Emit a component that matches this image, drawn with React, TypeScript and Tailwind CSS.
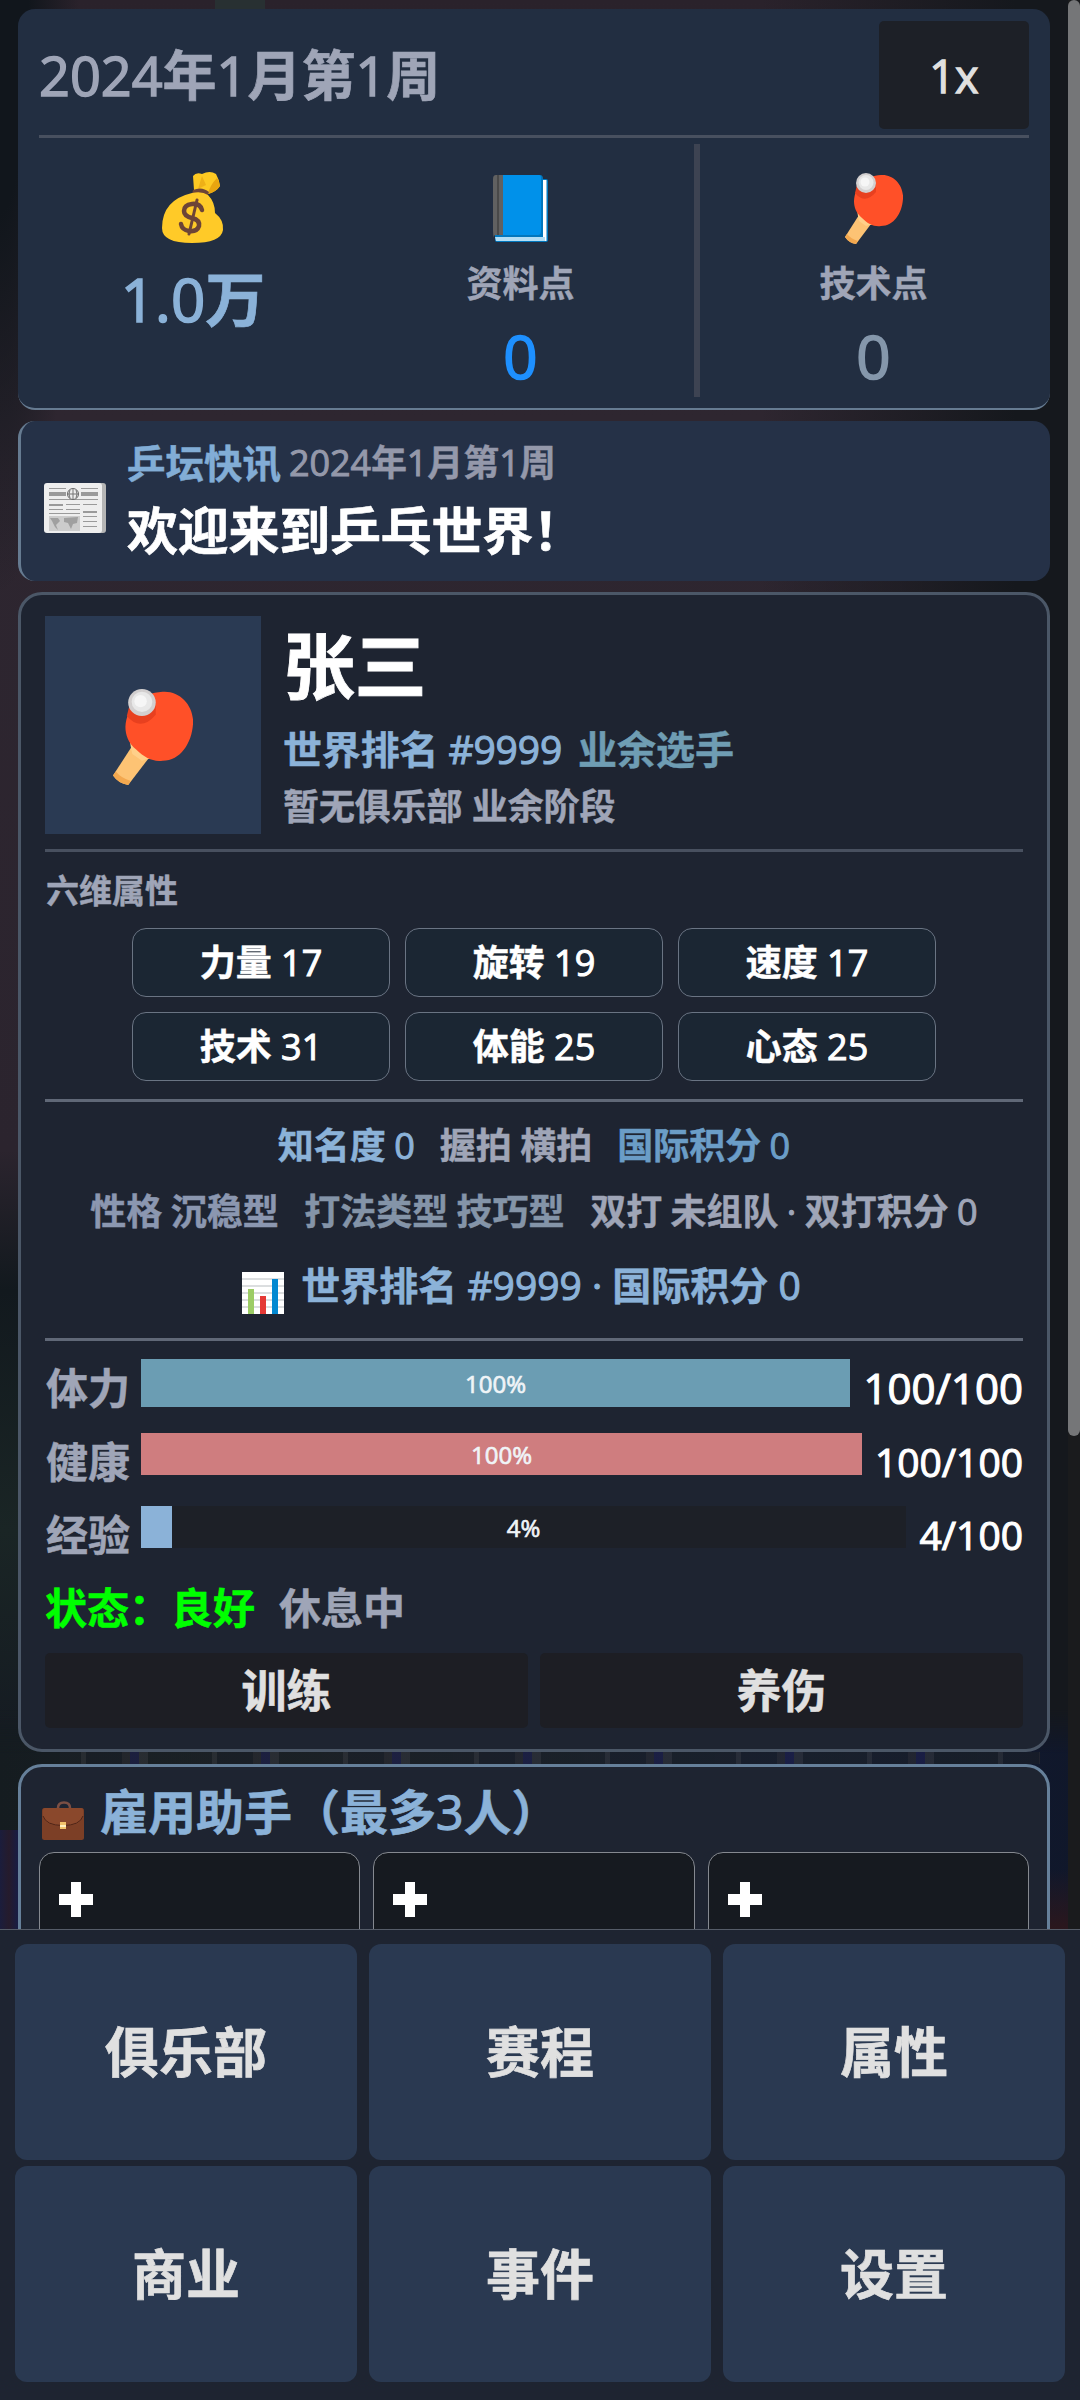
import type { ReactNode } from 'react'
import clsx from 'clsx'

const stats = [
  { label: '力量', value: 17 },
  { label: '旋转', value: 19 },
  { label: '速度', value: 17 },
  { label: '技术', value: 31 },
  { label: '体能', value: 25 },
  { label: '心态', value: 25 },
]

const navItems = ['俱乐部', '赛程', '属性', '商业', '事件', '设置']

const HAN = 'font-bold [-webkit-text-stroke:0.012em]'
const LATIN = 'font-medium [-webkit-text-stroke:0.028em]'

// Han characters are drawn bold, digits and latin one step lighter
function T({ children }: { children: string }) {
  const runs = children.match(/[\u3000-\u9fff\uff00-\uffef]+|[^\u3000-\u9fff\uff00-\uffef]+/g) ?? []
  return (
    <>
      {runs.map((run, i) => (
        <span key={i} className={/[\u3000-\uffef]/.test(run) ? HAN : LATIN}>
          {run}
        </span>
      ))}
    </>
  )
}

function Paddle({ className }: { className?: string }) {
  return (
    <svg viewBox="0 0 58 71" className={className} preserveAspectRatio="none">
      <path d="M14 42 L26 51 L11 71 Q4 70 0 64 Z" fill="#fdc374" />
      <path d="M0 64 Q4 70 11 71 L13 68 Q6 66 2 61 Z" fill="#f3a84f" />
      <path d="M12 37 Q13 44 14 48 L21 53 Q26 51 31 52 Z" fill="#ffd08a" />
      <path
        d="M36 2 C49 1 59 13 58 26 C57 40 49 53 36 53 C29 54 23 51 17 45 C11 40 9 34 9 28 C10 13 20 3 36 2 Z"
        fill="#ff5028"
      />
      <path d="M10 20 Q20 32 31 19 L31 10 L12 12 Z" fill="#e8401f" />
      <circle cx="21" cy="10" r="10" fill="#d2cfcf" />
      <circle cx="21" cy="9.500" r="7.500" fill="#e8e8e8" />
      <circle cx="20" cy="9" r="4.500" fill="#f6f6f6" />
    </svg>
  )
}

function MoneyBag() {
  return (
    <svg viewBox="0 0 62 72" className="h-[72px] w-[62px]">
      <path d="M32 18 L31 4 Q34 0 40 2 Q48 -2 54 2 Q57 7 58 14 Q54 20 46 22 Z" fill="#fdc922" />
      <path d="M46 22 Q48 13 55 6 Q57 9 58 14 Q54 20 46 22 Z" fill="#e8a510" />
      <path d="M40 4 L44 13 L36 17 Z" fill="#eeb017" />
      <path d="M31 18 Q40 14 47 20 L45 25 Q37 21 30 22 Z" fill="#6d4437" />
      <path
        d="M30 21 Q40 19 46 23 Q53 30 53 41 Q62 48 61 58 Q59 71 30 71 Q0 71 0 56 Q0 28 30 21 Z"
        fill="#ffca28"
      />
      <g fill="none" stroke="#6d4437" strokeWidth="4.500" strokeLinecap="round">
        <path d="M40 38 Q38 31 30 32 Q22 33 22 39 Q22 44 30 46 Q38 48 37 54 Q35 60 27 59 Q20 58 19 52" />
        <path d="M35 28 L27 62" strokeWidth="3" />
      </g>
    </svg>
  )
}

function Book() {
  return (
    <svg viewBox="0 0 55 67" className="h-[67px] w-[55px]">
      <rect x="2" y="4" width="53" height="63" rx="2" fill="#0277bd" />
      <path d="M50 5 H53.500 V66 H50 Z" fill="#fff" />
      <path d="M2 62 H52 V66 H3 Z" fill="#b3def5" />
      <path d="M3 0 H47 Q50 0 50 4 V58 Q49 61 46 61 H3 Z" fill="#0277bd" />
      <path d="M10 0 H46 Q48 0 48 3 V56 Q48 60 45 60 H10 Z" fill="#0091ea" />
      <path d="M3 0 H10 V60 H2 Q0 61 1 64 Q-1 60 0 4 Q0 0 3 0 Z" fill="#616161" />
      <path d="M5 0 V60" stroke="#424242" strokeWidth="1.500" />
    </svg>
  )
}

function Newspaper() {
  return (
    <svg viewBox="0 0 62 50" className="h-[50px] w-[62px]" preserveAspectRatio="none">
      <rect x="3" y="0" width="59" height="50" rx="3" fill="#b5b5b5" />
      <rect x="0" y="0" width="58" height="50" rx="3" fill="#eeeeee" />
      <g fill="#9a9a9a">
        <rect x="5" y="5" width="17" height="1" />
        <rect x="37" y="5" width="17" height="1" />
        <rect x="5" y="9" width="17" height="4" />
        <rect x="37" y="9" width="17" height="4" />
        <rect x="5" y="16" width="49" height="1" />
        <rect x="5" y="21" width="14" height="2" />
        <rect x="22" y="21" width="14" height="1" />
        <rect x="39" y="21" width="14" height="1" />
        <rect x="5" y="26" width="14" height="1" />
        <rect x="22" y="26" width="14" height="1" />
        <rect x="39" y="28" width="14" height="2" />
        <rect x="5" y="30" width="31" height="1" />
        <rect x="39" y="33" width="14" height="1" />
        <rect x="39" y="38" width="14" height="1" />
        <rect x="39" y="43" width="14" height="1" />
      </g>
      <ellipse cx="29" cy="11" rx="5.500" ry="5.500" fill="#eee" stroke="#666" />
      <path d="M24 11 H34 M29 6 V16 M26 7 Q24 11 26 15 M32 7 Q34 11 32 15" stroke="#777" fill="none" />
      <rect x="5" y="33" width="31" height="15" fill="#cccccc" />
      <path
        d="M6 35 H14 L16 38 L12 42 L14 47 L11 44 L8 38 Z M20 35 L34 34 L33 40 L29 41 L27 46 L24 40 L20 39 Z"
        fill="#a0a0a0"
      />
    </svg>
  )
}

function BarChart() {
  return (
    <svg viewBox="0 0 42 42" className="h-[42px] w-[42px]">
      <rect width="42" height="42" fill="#fff" />
      <path d="M0 7 H42 M0 14 H42 M0 21 H42 M0 28 H42 M0 35 H42" stroke="#b8bdc0" />
      <rect x="6" y="17" width="6" height="25" fill="#9ccc65" />
      <rect x="18" y="24" width="6" height="18" fill="#e53935" />
      <rect x="30" y="7" width="6" height="35" fill="#0288d1" />
    </svg>
  )
}

function Briefcase() {
  return (
    <svg viewBox="0 0 42 39" className="h-[39px] w-[42px]">
      <path d="M16 7 Q16 1.500 22 1.500 Q28 1.500 28 7" fill="none" stroke="#7b4f44" strokeWidth="2.500" />
      <rect x="0" y="7" width="42" height="32" rx="2.500" fill="#7c3f26" />
      <path d="M1 9 Q1 7 3 7 H39 Q41 7 41 9 V16 Q38 25 21 25 Q4 25 1 16 Z" fill="#8a482c" />
      <path d="M1 15 Q4 24.500 21 24.500 Q38 24.500 41 15" fill="none" stroke="#4e2417" />
      <rect x="18" y="21" width="6" height="7" fill="#f2c36b" />
      <rect x="18" y="24" width="6" height="2" fill="#fff0c0" />
    </svg>
  )
}

function Plus() {
  return (
    <svg viewBox="0 0 34 35" className="h-[35px] w-[34px]">
      <path d="M12 0 H22 V12 H34 V23 H22 V35 H12 V23 H0 V12 H12 Z" fill="#fff" />
    </svg>
  )
}

// Dimmed, out of focus spectator stands behind the panels
function Backdrop() {
  return (
    <>
      <div className="absolute inset-y-0 right-0 w-[320px] bg-[linear-gradient(90deg,transparent,#15181d_80%)]" />
      <div className="absolute top-0 left-0 h-[600px] w-[80px] bg-[radial-gradient(ellipse_at_top_left,#11161c_25%,transparent_70%)]" />
      <div className="absolute top-0 left-[215px] h-[9px] w-[50px] bg-[#283032]" />
      <div className="absolute top-[1710px] left-0 h-[219px] w-full bg-[linear-gradient(90deg,#151c20,#1b2027_30%,#141d36_75%,#10172a)] [mask-image:linear-gradient(180deg,transparent,#000_20%)]" />
      <div className="absolute top-[1752px] left-[60px] h-3 w-[980px] bg-[repeating-linear-gradient(90deg,#1c2126_0_21px,#33363b_21px_26px,#1a1f27_26px_62px,#2b2c31_62px_70px,#1e2050_70px_79px,#33363b_79px_88px,#1b2125_88px_131px)] opacity-60" />
      <div className="absolute top-[1830px] left-0 h-[99px] w-[18px] bg-[linear-gradient(90deg,#1b1d3c,#251b2c,#181d44)]" />
      <div className="absolute right-3 bottom-[471px] h-[60px] w-[20px] bg-[linear-gradient(180deg,transparent,#2b171d)]" />
    </>
  )
}

function Divider({ className }: { className?: string }) {
  return <div className={clsx('h-[3px] shrink-0', className)} />
}

function Meter(props: {
  label: string
  value: string
  percent: number
  barClass: string
  fillClass: string
  valueClass: string
}) {
  return (
    <div className="flex h-[73.500px]">
      <div className="w-24 pt-[8px] pl-px text-[42px] leading-[42px] text-[#9fa5b7]">
        <T>{props.label}</T>
      </div>
      <div className={clsx('relative flex-1 bg-[#1d2027]', props.barClass)}>
        <div className={clsx('h-full', props.fillClass)} style={{ width: `${props.percent}%` }} />
        <span className="absolute inset-0 flex items-center justify-center pt-[2px] text-[24px] text-[#f0f4f7]">
          <T>{`${props.percent}%`}</T>
        </span>
      </div>
      <div className={clsx('pt-[8px] text-right leading-[42px] text-white', props.valueClass)}>
        <T>{props.value}</T>
      </div>
    </div>
  )
}

function Resource({ icon, children, className }: { icon: ReactNode; children: ReactNode; className?: string }) {
  return (
    <div className={clsx('flex flex-col items-center pt-[28px]', className)}>
      <div className="flex h-[72px] items-center">{icon}</div>
      {children}
    </div>
  )
}

export default function App() {
  return (
    <div className="relative flex h-[2400px] w-[1080px] flex-col overflow-hidden bg-[linear-gradient(180deg,#2a222b_0,#2e2630_420px,#2b242e_1150px,#12191e_1290px,#1a2525_1530px,#151b22_1740px,#18213a_1930px)] font-['Open_Sans','Noto_Sans_CJK_SC',sans-serif]">
      <Backdrop />

      <main className="relative h-[1929px] overflow-hidden pt-[9px] pr-[30px] pl-[18px]">
        <section className="h-[401px] rounded-[17px] border-b-2 border-[#667b91] bg-[#222e41] px-[21px] pt-3">
          <div className="flex h-[108px] items-center justify-between">
            <h1 className="text-[54px] leading-none text-[#9fa5b7]">
              <T>2024年1月第1周</T>
            </h1>
            <button className="h-[108px] w-[150px] rounded-[5px] bg-[#1d2027] pt-[2px] text-[45px] text-[#e0e0e0]">
              <T>1x</T>
            </button>
          </div>
          <Divider className="mt-[6px] bg-[#48505f]" />
          <div className="mt-[6px] flex h-[253px]">
            <Resource icon={<MoneyBag />} className="w-[308px]">
              <div className="mt-[25px] text-[60px] leading-[60px] text-[#8bb2d8]">
                <T>1.0万</T>
              </div>
            </Resource>
            <Resource icon={<Book />} className="w-[347px]">
              <div className="mt-[22px] text-[36px] leading-[36px] text-[#9fa5b7]">
                <T>资料点</T>
              </div>
              <div className="mt-[24px] text-[60px] leading-[60px] text-[#1e90ff]">
                <T>0</T>
              </div>
            </Resource>
            <div className="w-[6px] bg-[#3d4352]" />
            <Resource icon={<Paddle className="h-[71px] w-[58px]" />} className="ml-[18px] w-[311px]">
              <div className="mt-[22px] text-[36px] leading-[36px] text-[#9fa5b7]">
                <T>技术点</T>
              </div>
              <div className="mt-[24px] text-[60px] leading-[60px] text-[#8597ab]">
                <T>0</T>
              </div>
            </Resource>
          </div>
        </section>

        <section className="mt-[11px] flex h-[160px] rounded-[17px] border-l-[3px] border-[#667b91] bg-[#253147] pl-[23px]">
          <div className="pt-[62px]">
            <Newspaper />
          </div>
          <div className="ml-[21px] pt-[21px]">
            <div className="flex items-center gap-[8px] whitespace-nowrap">
              <span className="text-[38.500px] leading-[42px] text-[#82add6]">
                <T>乒坛快讯</T>
              </span>
              <span className="text-[36px] leading-[42px] tracking-[-0.100px] text-[#9498aa]">
                <T>2024年1月第1周</T>
              </span>
            </div>
            <div className="mt-[21px] text-[51px] leading-[51px] tracking-[-0.250px] text-white">
              <T>欢迎来到乒乓世界！</T>
            </div>
          </div>
        </section>

        <section className="mt-[11px] h-[1160px] rounded-[24px] border-[3px] border-[#4b5767] bg-[#1e2431] px-6 pt-[21px]">
          <div className="flex h-[218px]">
            <div className="flex w-[216px] items-center justify-center bg-[#2a3a53] pt-[24px]">
              <Paddle className="h-[96px] w-[80px]" />
            </div>
            <div className="ml-[22px] flex-1">
              <h2 className="mt-[13px] text-[72px] leading-[72px] tracking-[-0.500px] text-white">
                <T>张三</T>
              </h2>
              <div className="mt-[28px] flex gap-[16px] text-[39px] leading-[39px] text-[#8bb2d8]">
                <span className="tracking-[-0.150px]">
                  <T>世界排名 #9999</T>
                </span>
                <span className="text-[#6f9db3]">
                  <T>业余选手</T>
                </span>
              </div>
              <div className="mt-[21px] text-[36px] leading-[36px] tracking-[-0.100px] text-[#9fa5b7]">
                <T>暂无俱乐部 业余阶段</T>
              </div>
            </div>
          </div>

          <Divider className="mt-[15px] bg-[#48505f]" />
          <h3 className="mt-[22px] pl-px text-[33px] leading-[33px] text-[#9fa5b7]">
            <T>六维属性</T>
          </h3>
          <div className="mx-auto mt-[21px] grid w-[804px] grid-cols-3 gap-[15px]">
            {stats.map((stat) => (
              <div
                key={stat.label}
                className="flex h-[69px] items-center justify-center rounded-[14px] border border-[#6a7483] bg-[#1b2633] text-[36px] text-white"
              >
                <span className="whitespace-pre">
                  <T>{`${stat.label} ${stat.value}`}</T>
                </span>
              </div>
            ))}
          </div>

          <Divider className="mt-[18px] bg-[#606877]" />
          <div className="mt-[26px] flex justify-center gap-[25px] text-[36px] leading-[36px] [word-spacing:-1px] whitespace-nowrap">
            <span className="text-[#8bb2d8]">
              <T>知名度 0</T>
            </span>
            <span className="text-[#9fa5b7]">
              <T>握拍 横拍</T>
            </span>
            <span className="text-[#6b9dc7]">
              <T>国际积分 0</T>
            </span>
          </div>
          <div className="mt-[30px] flex justify-center gap-[25.500px] text-[36px] leading-[36px] [word-spacing:-1px] whitespace-nowrap">
            <span className="text-[#8b97b0]">
              <T>性格 沉稳型</T>
            </span>
            <span className="text-[#8494a8]">
              <T>打法类型 技巧型</T>
            </span>
            <span className="text-[#9fa5b7]">
              <T>双打 未组队 · 双打积分 0</T>
            </span>
          </div>
          <div className="mt-[35px] mr-[25px] flex justify-center gap-[17px] text-[39px] leading-[39px] text-[#8bb2d8]">
            <div className="mt-[7px] h-9">
              <BarChart />
            </div>
            <span>
              <T>世界排名 #9999 · 国际积分 0</T>
            </span>
          </div>

          <Divider className="mt-[30px] bg-[#606877]" />
          <div className="mt-[18px] h-[220px]">
            <Meter
              label="体力"
              value="100/100"
              percent={100}
              barClass="h-12"
              fillClass="bg-[#6b9db3]"
              valueClass="w-[173px] text-[42px]"
            />
            <Meter
              label="健康"
              value="100/100"
              percent={100}
              barClass="h-[42px]"
              fillClass="bg-[#cf7d7f]"
              valueClass="w-[161px] text-[39px]"
            />
            <Meter
              label="经验"
              value="4/100"
              percent={4}
              barClass="h-[42px]"
              fillClass="bg-[#8bb2d8]"
              valueClass="w-[117px] text-[39px]"
            />
          </div>
          <div className="mt-[8px] flex gap-[24px] text-[42px] leading-[42px]">
            <span className="text-[#00ff00]">
              <T>状态：良好</T>
            </span>
            <span className="text-[#9fa5b7]">
              <T>休息中</T>
            </span>
          </div>
          <div className="mt-[24px] grid grid-cols-2 gap-3">
            {['训练', '养伤'].map((action) => (
              <button key={action} className="h-[75px] rounded-[5px] bg-[#1d1e24] text-[45px] leading-[45px] text-[#e0e0e0]">
                <T>{action}</T>
              </button>
            ))}
          </div>
        </section>

        <section className="mt-3 h-[400px] rounded-[24px] border-[3px] border-[#66809a] bg-[#1e2431] px-[18px] pt-[21px]">
          <div className="flex h-[64px] gap-4 pl-[3px]">
            <div className="pt-[13px]">
              <Briefcase />
            </div>
            <h3 className="text-[48px] leading-[48px] text-[#8bb2d8]">
              <T>雇用助手（最多3人）</T>
            </h3>
          </div>
          <div className="grid grid-cols-3 gap-[13px]">
            {[0, 1, 2].map((slot) => (
              <div key={slot} className="h-[220px] rounded-[15px] border border-[#858990] bg-[#161a20] pt-[29px] pl-[19px]">
                <Plus />
              </div>
            ))}
          </div>
        </section>
      </main>

      <div className="absolute top-0 right-0 h-[1929px] w-3 bg-[#1a1b1d]">
        <div className="h-[1436px] rounded-[6px] bg-[#757678]" />
      </div>

      <nav className="relative grid h-[471px] grid-cols-3 grid-rows-[216px_216px] gap-x-3 gap-y-[6px] border-t border-[#555c68] bg-[#1e2431] px-[15px] pt-[14px]">
        {navItems.map((item) => (
          <button key={item} className="rounded-xl bg-[#2a3951] text-[54px] text-[#e0e0e0]">
            <T>{item}</T>
          </button>
        ))}
      </nav>
    </div>
  )
}
